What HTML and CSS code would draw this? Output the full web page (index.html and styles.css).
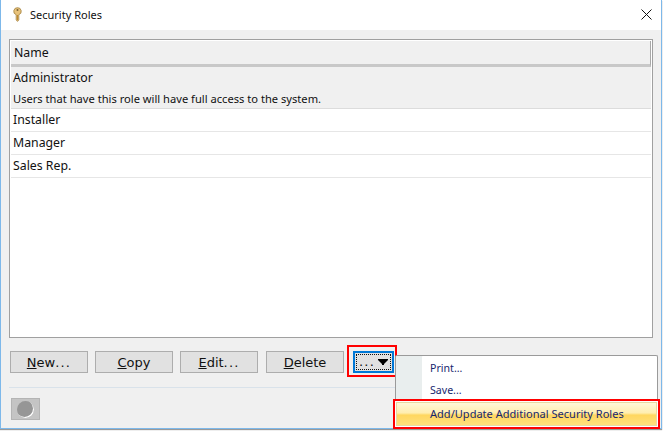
FILE: index.html
```html
<!DOCTYPE html>
<html>
<head>
<meta charset="utf-8">
<title>Security Roles</title>
<link rel="stylesheet" href="styles.css">
</head>
<body>
<div class="window">
  <header class="titlebar">
    <svg class="key" width="9" height="15" viewBox="0 0 9 15"><path d="M4.5.7a3.6 3.6 0 0 1 1.3 7v5.2L4.5 14.4 3.2 12.9V7.7a3.6 3.6 0 0 1 1.3-7z" fill="#e8c27a" stroke="#a98a4c" stroke-width=".9"/><circle cx="4.5" cy="3" r="1" fill="#7a6232"/><path d="M4.5 8v5" stroke="#c08a30" stroke-width="1"/></svg>
    <span class="title">Security Roles</span>
    <svg class="close" width="11" height="11" viewBox="0 0 11 11"><path d="M.5.5l10 10M10.5.5l-10 10" stroke="#111" stroke-width="1" fill="none"/></svg>
  </header>
  <main class="content">
    <section class="table">
      <div class="thead">Name</div>
      <div class="row selected">
        <div class="name">Administrator</div>
        <div class="desc">Users that have this role will have full access to the system.</div>
      </div>
      <div class="row">Installer</div>
      <div class="row">Manager</div>
      <div class="row">Sales Rep.</div>
    </section>
    <div class="buttons">
      <button class="btn"><u>N</u>ew<span class="dots">...</span></button>
      <button class="btn"><u>C</u>opy</button>
      <button class="btn"><u>E</u>dit<span class="dots">...</span></button>
      <button class="btn"><u>D</u>elete</button>
      <span class="more-wrap">
        <button class="more"><span class="focus"><span class="dots">...</span><svg class="arrow" width="10" height="6" viewBox="0 0 10 6"><path d="M0 0h10v1L6 5v1H4V5L0 1z" fill="#000"/></svg></span></button>
      </span>
    </div>
    <div class="divider"></div>
    <div class="status"><span class="status-btn"><i class="dot"></i></span></div>
  </main>
  <div class="menu">
    <div class="menu-item">Print...</div>
    <div class="menu-item">Save...</div>
    <div class="menu-hot"><div class="menu-glow">Add/Update Additional Security Roles</div></div>
  </div>
</div>
</body>
</html>
```
FILE: styles.css
```css
* { box-sizing: border-box; }
html, body { margin: 0; height: 100%; background: #fff; overflow: hidden; }
body { font-family: "Noto Sans", "Open Sans", sans-serif; color: #111; }
.window { position: relative; width: 662px; height: 429px; display: flex; flex-direction: column; border: 1px solid #7db8ea; border-top: 0; background: #f0f0f0; box-shadow: 0 1px 1px #999; }
.titlebar { height: 30px; background: #fff; display: flex; align-items: center; padding: 0 9px 1px 12px; flex: none; }
.key { flex: none; }
.title { font-size: 11px; margin-left: 8px; flex: 1; }
.content { flex: 1; display: flex; flex-direction: column; padding: 9px 8px 0 8px; min-height: 0; }
.table { height: 299px; flex: none; background: #fff; border: 1px solid #a0a0a0; font-size: 12.3px; padding: 1px; }
.thead { height: 26px; background: #f0f0f0; border-bottom: 3px solid #c8c8c8; padding: 1px 0 0 3px; line-height: 21px; border-right: 1px solid #a8a8a8; }
.row { height: 23px; border-bottom: 1px solid #e6e6e6; padding-left: 2px; line-height: 22px; }
.row.selected { height: 42px; background: #f0f0f0; border-bottom: 1px solid #dcdcdc; }
.name { height: 22px; line-height: 21px; }
.desc { font-size: 11.15px; line-height: 19px; }
.buttons { display: flex; align-items: flex-start; height: 22px; margin-top: 13px; padding-left: 1px; }
.btn { width: 78px; height: 22px; margin-right: 7px; background: #e1e1e1; border: 1px solid #adadad; font: 13px "DejaVu Sans", sans-serif; color: #111; padding: 0; }
.btn:nth-child(3) { margin-right: 8px; }
.btn:nth-child(4) { margin-right: 3px; }
.dots { letter-spacing: 1.2px; }
.more-wrap { flex: none; display: block; width: 50px; height: 32px; margin-top: -6px; padding: 4px 0 0 4px; border: 2px solid #f00; }
.more { display: block; width: 41px; height: 22px; padding: 1px; background: #e1e1e1; border: 2px solid #0078d7; }
.focus { display: flex; height: 16px; align-items: center; justify-content: space-between; border: 1px dotted #111; font: 13px "DejaVu Sans", sans-serif; padding: 0 2px; line-height: 14px; color: #111; }
.arrow { flex: none; }
.divider { height: 1px; background: #d9e2ea; margin-top: 14px; }
.status { padding: 10px 0 0 2px; }
.status-btn { display: flex; width: 29px; height: 22px; align-items: center; justify-content: center; background: #c4c4c4; border: 1px solid #b4b4b4; }
.dot { width: 17px; height: 17px; border-radius: 50%; background: #969696; box-shadow: inset -1px -1px 0 #fff; }
.menu { position: absolute; left: 394px; top: 355px; width: 263px; height: 44px; background: #fff; border: 1px solid #9a9a9a; border-bottom: 0; border-radius: 2px 2px 0 0; font-size: 10.6px; color: #17266e; padding-top: 1px; box-shadow: inset 26px 0 0 #e9eeee; }
.menu-item { height: 22px; line-height: 22px; padding-left: 34px; }
.menu-hot { position: absolute; left: -3px; top: 43px; width: 267px; height: 30px; border: 2px solid #f00; padding: 1px; background: #fff; }
.menu-glow { height: 24px; line-height: 22px; padding-left: 33px; font-size: 11.05px; background: linear-gradient(#fff8d8 0%, #ffeeb0 45%, #ffd75f 55%, #ffdf7c 100%); border: 1px solid #e8d9a0; }
```
